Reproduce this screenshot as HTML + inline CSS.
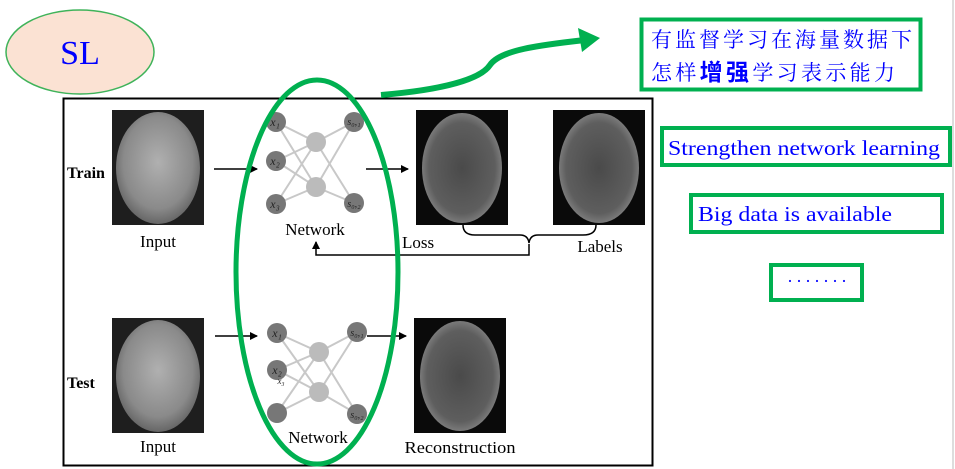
<!DOCTYPE html>
<html><head><meta charset="utf-8"><style>
html,body{margin:0;padding:0;background:#fff;}
svg{display:block}
</style></head><body>
<svg width="955" height="469" viewBox="0 0 955 469" xmlns="http://www.w3.org/2000/svg" font-family="Liberation Serif, serif">
<defs>
<radialGradient id="b1" cx="50%" cy="45%" r="55%"><stop offset="0" stop-color="#b0b0b0"/><stop offset="0.75" stop-color="#8a8a8a"/><stop offset="1" stop-color="#666"/></radialGradient>
<radialGradient id="b2" cx="50%" cy="50%" r="55%"><stop offset="0" stop-color="#4a4a4a"/><stop offset="0.75" stop-color="#5e5e5e"/><stop offset="1" stop-color="#8a8a8a"/></radialGradient>
<marker id="ah" markerWidth="8" markerHeight="8" refX="7" refY="4" orient="auto" markerUnits="userSpaceOnUse"><path d="M0,0 L8,4 L0,8 z" fill="#000"/></marker>
</defs>
<line x1="953" y1="0" x2="953" y2="469" stroke="#bbb" stroke-width="1"/>
<ellipse cx="80" cy="52" rx="74" ry="42" fill="#fbe2d3" stroke="#3fb35a" stroke-width="1.5"/>
<text x="80" y="64" font-size="34" fill="#0000ff" text-anchor="middle">SL</text>
<rect x="63.5" y="98.5" width="589" height="367" fill="#fff" stroke="#000" stroke-width="2"/>
<text x="67" y="178" font-size="16" font-weight="bold">Train</text>
<text x="67" y="388" font-size="16" font-weight="bold">Test</text>
<g>
<rect x="112" y="110" width="92" height="115" fill="#1e1e1e"/><ellipse cx="158" cy="168" rx="42" ry="56" fill="url(#b1)"/>
<rect x="112" y="318" width="92" height="115" fill="#1e1e1e"/><ellipse cx="158" cy="376" rx="42" ry="56" fill="url(#b1)"/>
<rect x="416" y="110" width="92" height="115" fill="#0a0a0a"/><ellipse cx="462" cy="168" rx="40" ry="55" fill="url(#b2)"/>
<rect x="553" y="110" width="92" height="115" fill="#0a0a0a"/><ellipse cx="599" cy="168" rx="40" ry="55" fill="url(#b2)"/>
<rect x="414" y="318" width="92" height="115" fill="#0a0a0a"/><ellipse cx="460" cy="376" rx="40" ry="55" fill="url(#b2)"/>
</g>
<g font-size="17" text-anchor="middle">
<text x="158" y="247">Input</text>
<text x="158" y="452">Input</text>
<text x="315" y="235">Network</text>
<text x="318" y="443">Network</text>
<text x="418" y="248">Loss</text>
<text x="600" y="252">Labels</text>
<text x="460" y="453" textLength="111" lengthAdjust="spacingAndGlyphs">Reconstruction</text>
</g>
<g stroke="#c8c8c8" stroke-width="2" fill="none">
<path d="M276,122 L316,142 L354,122 M276,122 L316,187 L354,203 M276,161 L316,142 L354,203 M276,161 L316,187 L354,122 M276,204 L316,142 M276,204 L316,187"/>
<path d="M277,333 L319,352 L357,332 M277,333 L319,392 L357,414 M277,370 L319,352 L357,414 M277,370 L319,392 L357,332 M277,413 L319,352 M277,413 L319,392"/>
</g>
<g fill="#777"><circle cx="276" cy="122" r="10"/><circle cx="276" cy="161" r="10"/><circle cx="276" cy="204" r="10"/><circle cx="354" cy="122" r="10"/><circle cx="354" cy="203" r="10"/>
<circle cx="277" cy="333" r="10"/><circle cx="277" cy="370" r="10"/><circle cx="277" cy="413" r="10"/><circle cx="357" cy="332" r="10"/><circle cx="357" cy="414" r="10"/></g>
<g fill="#bbb"><circle cx="316" cy="142" r="10"/><circle cx="316" cy="187" r="10"/><circle cx="319" cy="352" r="10"/><circle cx="319" cy="392" r="10"/></g>
<g font-size="12" font-style="italic" fill="#222" text-anchor="middle">
<text x="275" y="126">x₁</text><text x="275" y="165">x₂</text><text x="275" y="208">x₃</text>
<text x="354" y="125" font-size="10">s₀,₁</text><text x="354" y="207" font-size="10">s₀,₂</text>
<text x="277" y="337">x₁</text><text x="277" y="374">x₂</text><text x="281" y="384" font-size="9">x₃</text>
<text x="357" y="336" font-size="10">s₀,₁</text><text x="357" y="418" font-size="10">s₀,₂</text>
</g>
<g stroke="#000" stroke-width="1.5" fill="none">
<line x1="214" y1="169" x2="257" y2="169" marker-end="url(#ah)"/>
<line x1="366" y1="169" x2="408" y2="169" marker-end="url(#ah)"/>
<line x1="215" y1="336" x2="257" y2="336" marker-end="url(#ah)"/>
<line x1="367" y1="336" x2="406" y2="336" marker-end="url(#ah)"/>
<path d="M463,225 Q463,235 475,235 L520,235 Q528,235 529,243 Q530,235 538,235 L583,235 Q596,235 596,225"/>
<path d="M529,244 L529,255 L316,255 L316,242" marker-end="url(#ah)"/>
</g>
<ellipse cx="317" cy="272" rx="81" ry="192" fill="none" stroke="#00b050" stroke-width="5"/>
<path d="M381,95 C440,90 480,80 490,65 C500,50 540,45 585,40" fill="none" stroke="#00b050" stroke-width="6"/>
<path d="M600,38 L578,28 L582,52 z" fill="#00b050"/>
<rect x="641.5" y="19.5" width="279" height="70" fill="#fff" stroke="#00b050" stroke-width="4"/>
<text x="651" y="47" font-size="21" fill="#0000ff" font-family="Liberation Serif, Noto Serif CJK SC, serif" textLength="261" lengthAdjust="spacing">有监督学习在海量数据下</text>
<text x="651" y="80" font-size="21" fill="#0000ff" font-family="Liberation Serif, Noto Serif CJK SC, serif" textLength="244" lengthAdjust="spacing">怎样<tspan font-weight="bold" font-family="Noto Sans CJK SC, sans-serif" font-size="23">增强</tspan>学习表示能力</text>
<rect x="662" y="128" width="288" height="37" fill="#fff" stroke="#00b050" stroke-width="4"/>
<text x="668" y="155" font-size="21" fill="#0000ff" textLength="272" lengthAdjust="spacingAndGlyphs">Strengthen network learning</text>
<rect x="691" y="195" width="251" height="37" fill="#fff" stroke="#00b050" stroke-width="4"/>
<text x="698" y="221" font-size="21" fill="#0000ff" textLength="194" lengthAdjust="spacingAndGlyphs">Big data is available</text>
<rect x="771" y="265" width="91" height="35" fill="#fff" stroke="#00b050" stroke-width="4"/>
<text x="787" y="287" font-size="18" fill="#0000ff" textLength="60" lengthAdjust="spacing">·······</text>
</svg>
</body></html>
